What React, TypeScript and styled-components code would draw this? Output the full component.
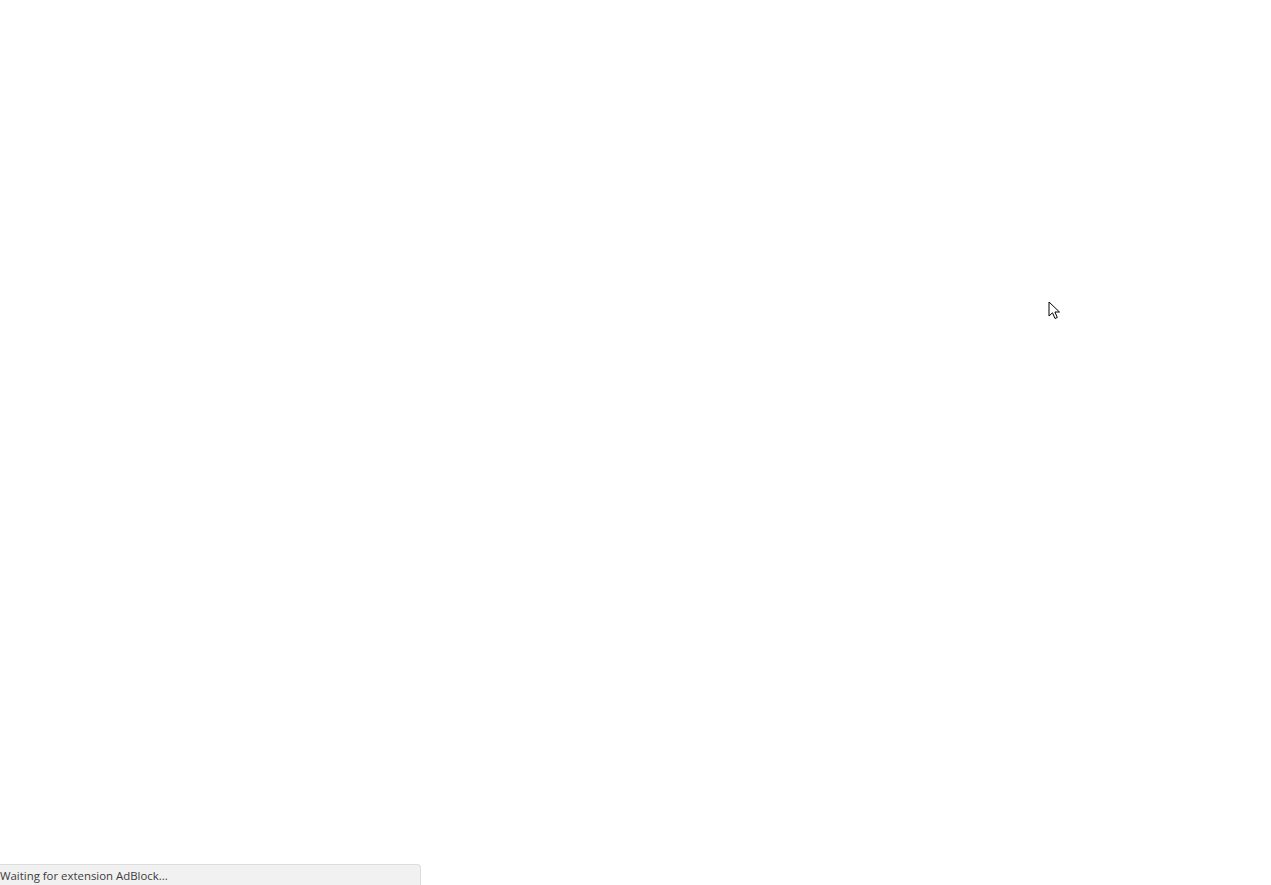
import styled, { createGlobalStyle } from "styled-components";

const GlobalStyle = createGlobalStyle`
  html, body {
    margin: 0;
    padding: 0;
    background: #ffffff;
  }
  #root {
    height: 100vh;
  }
`;

const Page = styled.div`
  position: relative;
  display: flex;
  flex-direction: column;
  height: 100vh;
  background: #ffffff;
  overflow: hidden;
`;

const Blank = styled.main`
  flex: 1;
`;

const StatusBubble = styled.div`
  box-sizing: border-box;
  width: 421px;
  height: 21px;
  display: flex;
  align-items: center;
  background: #f1f1f1;
  border-top: 1px solid #dcdcdc;
  border-right: 1px solid #dcdcdc;
  border-top-right-radius: 4px;
  font-family: "Open Sans", "Noto Sans", sans-serif;
  font-size: 11.4px;
  color: #3c3c3c;
  white-space: nowrap;
`;

const Cursor = styled.svg`
  position: absolute;
  left: 1048px;
  top: 301px;
  width: 14px;
  height: 20px;
`;

export default function App() {
  return (
    <>
      <GlobalStyle />
      <Page>
        <Blank />
        <StatusBubble>Waiting for extension AdBlock...</StatusBubble>
        <Cursor viewBox="0 0 14 20">
          <path
            d="M1 1 L1 15 L4.5 11.8 L7 17.5 L9.3 16.5 L6.9 11 L11.5 11 Z"
            fill="#ffffff"
            stroke="#000000"
            strokeWidth="1"
            strokeLinejoin="miter"
          />
        </Cursor>
      </Page>
    </>
  );
}
